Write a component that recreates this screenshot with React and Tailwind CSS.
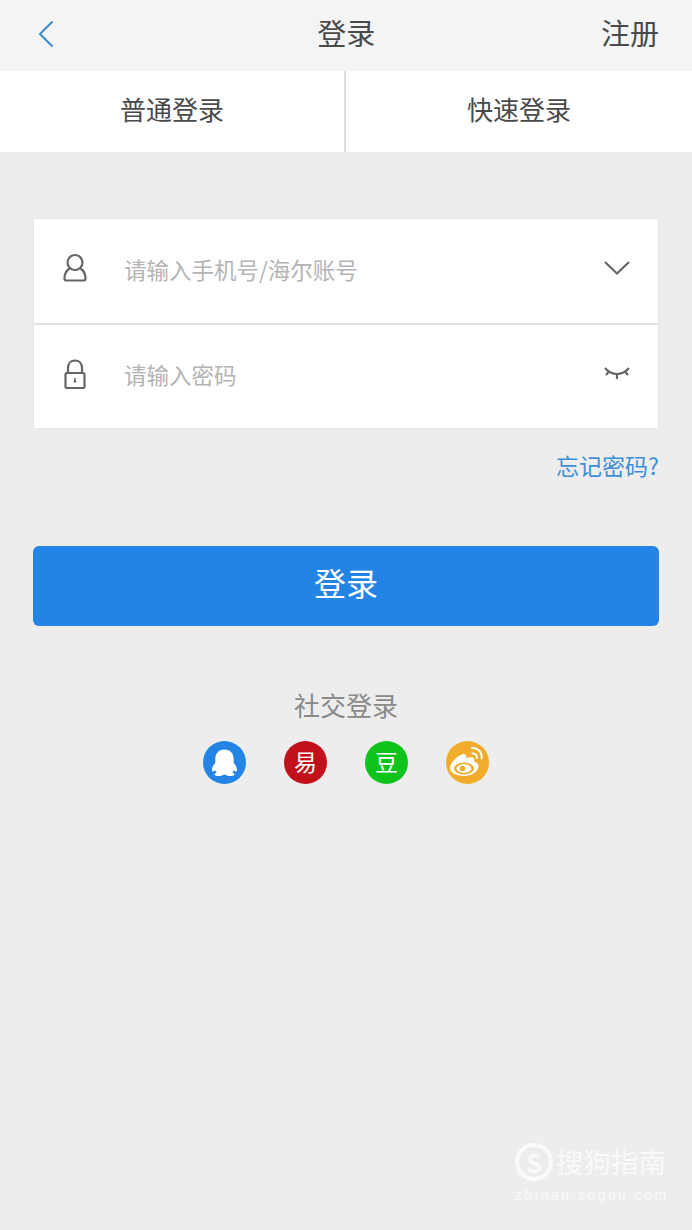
import React from 'react';

const cjk = "font-['Noto_Sans_CJK_SC','Liberation_Sans',sans-serif]";

function UserIcon() {
  return (
    <svg className="mb-[6px]" width="24" height="30" viewBox="0 0 24 30" fill="none" stroke="#666" strokeWidth="2.200">
      <circle cx="12" cy="9.500" r="7.500" />
      <path d="M6.500 15.500C3.500 17.500 1.500 21 1.500 25.500c0 1.400.6 2 2 2h17c1.400 0 2-.6 2-2 0-4.500-2-8-5-10" />
    </svg>
  );
}

function LockIcon() {
  return (
    <svg className="mb-[6px]" width="24" height="30" viewBox="0 0 24 30" fill="none" stroke="#666" strokeWidth="2.200">
      <path d="M5 14V9c0-4.500 3-7.500 7-7.500s7 3 7 7.500v5" />
      <rect x="2.500" y="14" width="19" height="15" rx="1.500" />
      <path d="M12 19v3" strokeWidth="1.600" />
      <circle cx="12" cy="22.500" r="1.300" fill="#666" stroke="none" />
    </svg>
  );
}

function Chevron() {
  return (
    <svg className="mb-[6px]" width="26" height="16" viewBox="0 0 26 16" fill="none" stroke="#666" strokeWidth="2.200">
      <path d="M1 2l12 11.500L25 2" />
    </svg>
  );
}

function ClosedEye() {
  return (
    <svg className="mb-[6px]" width="26" height="16" viewBox="0 0 26 16" fill="none" stroke="#666" strokeWidth="2.200">
      <path d="M1 2c3.500 4 7.500 6 12 6s8.500-2 12-6" />
      <path d="M5.500 5L2 9M20.500 5L24 9M13 8v5" />
    </svg>
  );
}

function QQIcon() {
  return (
    <svg width="43" height="43" viewBox="0 0 43 43">
      <circle cx="21.500" cy="21.500" r="21.500" fill="#2384e6" />
      <path d="M21.500 8.500c-5.800 0-9.200 4-9.200 9.500v3.700c-1.900 2.500-3.300 4.800-3.300 7 0 1.200.4 1.800.9 1.800.7 0 1.500-.7 2.100-1.600.4 1 1 1.900 1.700 2.700-1.300.5-2.200 1.100-2.200 1.800 0 1.100 2.400 1.500 4.500 1.500 2 0 3.800-.6 5.500-1.500 1.700.9 3.500 1.500 5.500 1.500 2.100 0 4.500-.4 4.500-1.500 0-.7-.9-1.300-2.200-1.800.7-.8 1.300-1.700 1.700-2.700.6.900 1.400 1.600 2.100 1.600.5 0 .9-.6.9-1.800 0-2.200-1.400-4.500-3.300-7V18c0-5.500-3.400-9.500-9.200-9.500z" fill="#fff" />
    </svg>
  );
}

function WeiboIcon() {
  return (
    <svg width="43" height="43" viewBox="0 0 43 43">
      <circle cx="21.500" cy="21.500" r="21.500" fill="#f2ac2b" />
      <path d="M18 35c-6.500 0-14-2.800-14-8 0-4.500 6.500-12 12.500-13.800 3-.8 4.300 1 3.400 4 4-1.600 8-1.500 8.500 1 .2 1-.2 1.800-.6 2.500 3 .6 4.700 2.300 4.700 4.800C32 31 25.500 35 18 35z" fill="#fff" />
      <ellipse cx="18" cy="27.500" rx="10" ry="6" fill="#f2ac2b" />
      <ellipse cx="18" cy="27.500" rx="7.500" ry="4.300" fill="#fff" />
      <circle cx="16.500" cy="27.500" r="2.800" fill="#f2ac2b" />
      <path d="M26 7c5-.6 10.500 3.500 9.500 10.500M26.500 12.500c2.800-.3 4.800 1.800 4.300 4.500" fill="none" stroke="#fff" strokeWidth="2" strokeLinecap="round" />
    </svg>
  );
}

function TextCircle({ bg, children }) {
  return (
    <div className={`flex h-[43px] w-[43px] items-center justify-center rounded-full pb-[2px] text-[23px] leading-none text-white ${bg}`}>
      {children}
    </div>
  );
}

function Watermark() {
  return (
    <div className="absolute left-[515px] top-[1143px] w-[155px] text-[#fafafa]">
      <div className="flex items-center gap-[3px]">
        <div className="flex h-[38px] w-[38px] shrink-0 items-center justify-center rounded-full border-[4px] border-[#fafafa] text-[25px] font-bold leading-none">
          S
        </div>
        <span className="whitespace-nowrap text-[27.500px] leading-none">搜狗指南</span>
      </div>
      <div className="mt-[7px] whitespace-nowrap text-[14px] leading-none tracking-[2.500px] font-['Liberation_Sans',sans-serif]">
        zhinan.sogou.com
      </div>
    </div>
  );
}

function App() {
  return (
    <div className={`relative h-[1230px] w-[692px] overflow-hidden bg-[#ededed] ${cjk}`}>
      {/* Header */}
      <div className="grid h-[71px] grid-cols-3 items-center bg-[#f4f4f4] pb-[6px] pl-[38px] pr-[33px] text-[#4a4a4a]">
        <svg className="mt-[2px]" width="16" height="28" viewBox="0 0 16 28" fill="none" stroke="#3c8ad0" strokeWidth="2">
          <path d="M14.500 1.500L2 14l12.500 12.500" />
        </svg>
        <span className="ml-[-4.500px] text-center text-[29px] leading-none">登录</span>
        <span className="text-right text-[29px] leading-none">注册</span>
      </div>

      {/* Tabs */}
      <div className="flex h-[81px] bg-white text-[26px] leading-none text-[#4a4a4a]">
        <div className="flex w-[344px] items-center justify-center pb-[6px]">普通登录</div>
        <div className="w-[2px] bg-[#dcdcdc]" />
        <div className="flex flex-1 items-center justify-center pb-[6px]">快速登录</div>
      </div>

      {/* Form card */}
      <div className="ml-[34px] mt-[67px] w-[624px] bg-white shadow-[0_0_2px_rgba(0,0,0,0.1)]">
        <div className="flex h-[106px] items-center border-b-2 border-[#e2e2e2] pl-[29px] pr-[28px]">
          <UserIcon />
          <span className="ml-[37px] flex-1 pb-[4px] text-[22.500px] leading-none text-[#b4b4b4]">请输入手机号/海尔账号</span>
          <Chevron />
        </div>
        <div className="flex h-[103px] items-center pl-[29px] pr-[28px]">
          <LockIcon />
          <span className="ml-[37px] flex-1 pb-[4px] text-[22.500px] leading-none text-[#b4b4b4]">请输入密码</span>
          <ClosedEye />
        </div>
      </div>

      <div className="mr-[33px] mt-[24px] text-right text-[23px] leading-[27px] text-[#3e8fd6]">忘记密码?</div>

      {/* Submit */}
      <button className="ml-[33px] mt-[67px] flex h-[80px] w-[626px] items-center justify-center rounded-[6px] bg-[#2384e6] pb-[8px] text-[32px] leading-none text-white">
        登录
      </button>

      {/* Social */}
      <div className="mt-[66px] text-center text-[26px] leading-none text-[#8a8a8a]">社交登录</div>
      <div className="mt-[23px] flex justify-center gap-[38px]">
        <QQIcon />
        <TextCircle bg="bg-[#c1121c]">易</TextCircle>
        <TextCircle bg="bg-[#0ec41c]">豆</TextCircle>
        <WeiboIcon />
      </div>

      <Watermark />
    </div>
  );
}

export default App;
